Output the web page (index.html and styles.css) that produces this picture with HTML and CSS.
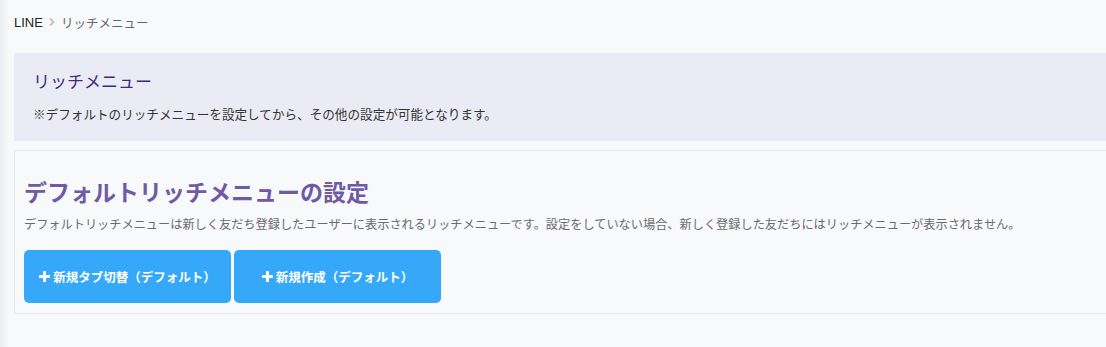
FILE: index.html
```html
<!DOCTYPE html>
<html lang="ja">
<head>
<meta charset="UTF-8">
<meta name="viewport" content="width=device-width, initial-scale=1.0">
<title>リッチメニュー</title>
<link rel="stylesheet" href="styles.css">
</head>
<body>

<div class="main">
  <div class="breadcrumb">
    <span class="crumb-root">LINE</span>
    <svg class="crumb-sep" width="8" height="10" viewBox="0 0 8 10"><path d="M2 1.5 L5.5 5 L2 8.5" fill="none" stroke="#c0c2c6" stroke-width="1.8"/></svg>
    <span class="crumb-current">リッチメニュー</span>
  </div>

  <div class="notice">
    <h2 class="notice-title">リッチメニュー</h2>
    <p class="notice-text">※デフォルトのリッチメニューを設定してから、その他の設定が可能となります。</p>
  </div>

  <div class="card">
    <h1 class="card-title">デフォルトリッチメニューの設定</h1>
    <p class="card-text">デフォルトリッチメニューは新しく友だち登録したユーザーに表示されるリッチメニューです。設定をしていない場合、新しく登録した友だちにはリッチメニューが表示されません。</p>
    <div class="actions">
      <button class="btn"><span class="plus"></span>新規タブ切替（デフォルト）</button>
      <button class="btn"><span class="plus"></span>新規作成（デフォルト）</button>
    </div>
  </div>
</div>

</body>
</html>
```

FILE: styles.css
```css
html, body {
  margin: 0;
  height: 100%;
  overflow: hidden;
}
body {
  font-family: "Noto Sans CJK JP", "Noto Sans", sans-serif;
  background: linear-gradient(to right, #eceef1 0, #f8f9fb 9px);
  color: #333;
}
.main {
  padding: 13px 0 0 14px;
}
.breadcrumb {
  display: flex;
  align-items: center;
  height: 18px;
  font-size: 12.5px;
}
.crumb-root {
  font-family: "Liberation Sans", Arial, sans-serif;
  font-size: 13px;
  color: #222;
}
.crumb-sep {
  margin: 0 5px 0 5px;
}
.crumb-current {
  color: #666;
}
.notice {
  margin-top: 22px;
  background-color: #ebebf5;
  padding: 15px 19px 18px;
  height: 55px;
}
.notice-title {
  margin: 0;
  font-size: 17px;
  font-weight: normal;
  color: #3f2b7a;
  line-height: 26px;
}
.notice-text {
  margin: 12px 0 0;
  font-size: 12.6px;
  line-height: 16px;
  color: #333;
}
.card {
  margin-top: 9px;
  border: 1px solid #e6e8eb;
  border-right: none;
  padding: 24px 9px 10px;
}
.card-title {
  margin: 0;
  font-size: 23px;
  line-height: 32px;
  font-weight: bold;
  color: #6f5aa6;
}
.card-text {
  margin: 9px 0 0;
  font-size: 12.2px;
  line-height: 16px;
  color: #6b6b6b;
}
.actions {
  display: flex;
  gap: 3px;
  margin-top: 18px;
}
.btn {
  width: 207px;
  height: 53px;
  border: none;
  border-radius: 5px;
  background-color: #36a8f9;
  color: #fff;
  font-family: inherit;
  font-size: 12.5px;
  font-weight: bold;
  display: flex;
  align-items: center;
  justify-content: center;
  cursor: pointer;
}
.plus {
  position: relative;
  width: 11px;
  height: 11px;
  margin-right: 3px;
}
.plus::before, .plus::after {
  content: "";
  position: absolute;
  background: #fff;
}
.plus::before {
  left: 4px;
  top: 0;
  width: 3px;
  height: 11px;
}
.plus::after {
  left: 0;
  top: 4px;
  width: 11px;
  height: 3px;
}
```
